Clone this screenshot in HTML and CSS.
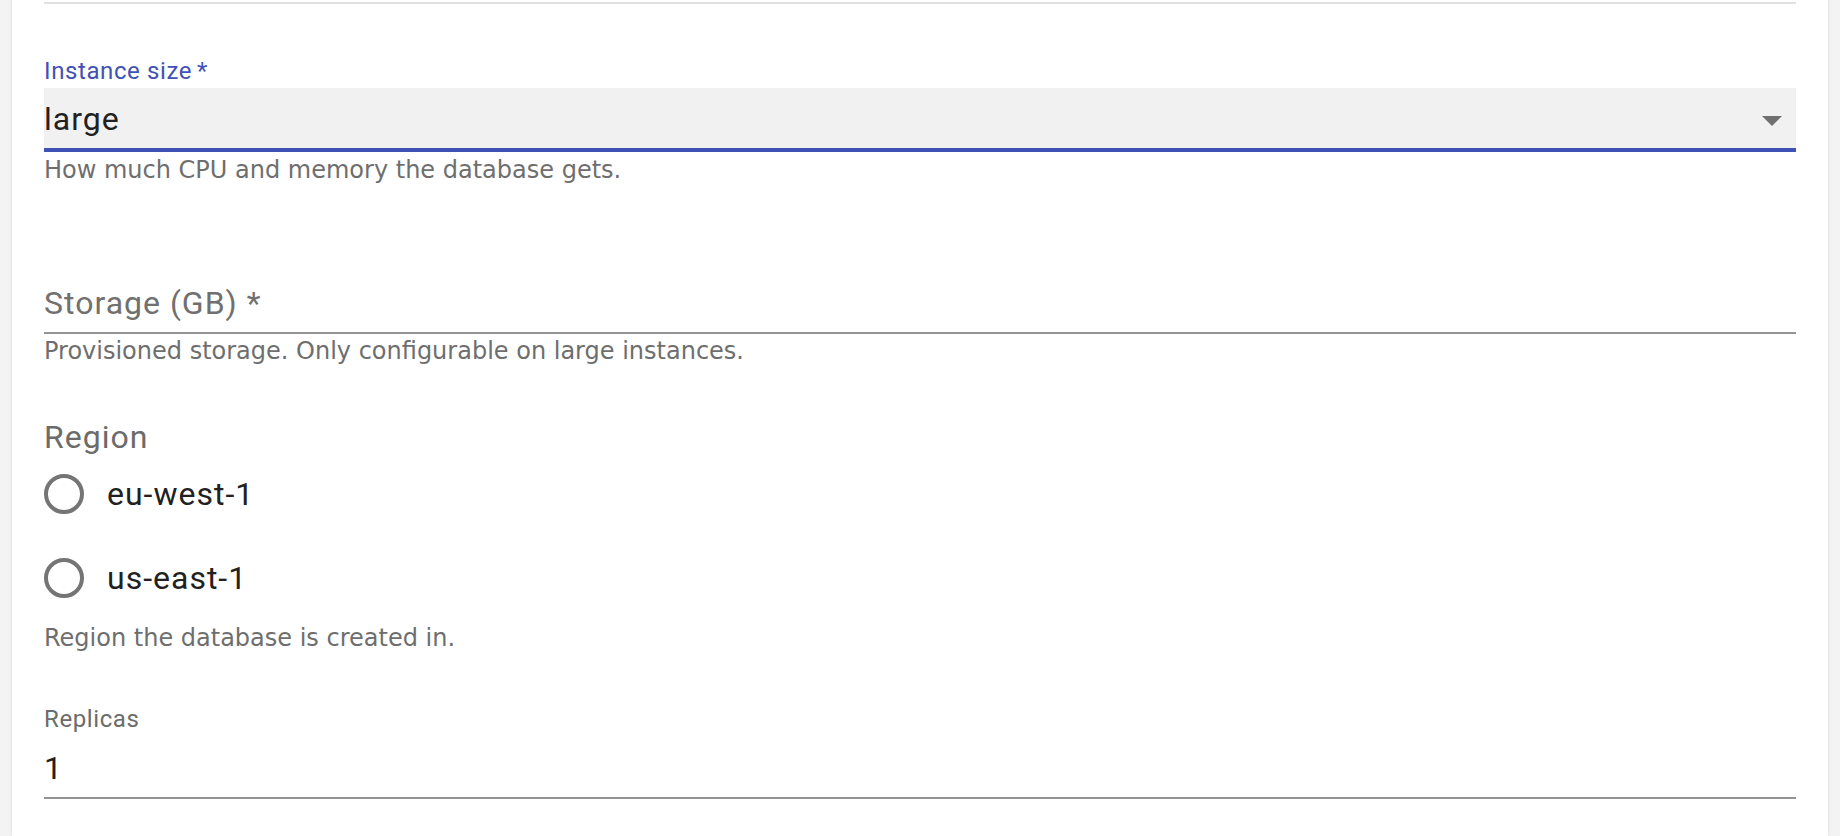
FILE: index.html
```html
<!DOCTYPE html>
<html lang="en">
<head>
<meta charset="utf-8">
<title>Database settings</title>
<link rel="stylesheet" href="styles.css">
</head>
<body>
<main class="card">
  <div class="divider"></div>

  <section class="field field-instance">
    <label class="float-label focused">Instance size<span class="req">*</span></label>
    <div class="select">
      <span class="select-value">large</span>
      <svg class="select-arrow" width="20" height="10" viewBox="0 0 20 10" aria-hidden="true"><polygon points="0,0 20,0 10,10" /></svg>
    </div>
    <p class="helper">How much CPU and memory the database gets.</p>
  </section>

  <section class="field field-storage">
    <div class="textfield">
      <span class="placeholder-label">Storage (GB) *</span>
    </div>
    <p class="helper helper-tight">Provisioned storage. Only configurable on large instances.</p>
  </section>

  <section class="field field-region">
    <div class="group-label">Region</div>
    <div class="radio-row">
      <span class="radio"></span>
      <span class="radio-text">eu-west-1</span>
    </div>
    <div class="radio-row">
      <span class="radio"></span>
      <span class="radio-text">us-east-1</span>
    </div>
    <p class="helper">Region the database is created in.</p>
  </section>

  <section class="field field-replicas">
    <label class="float-label">Replicas</label>
    <div class="textfield textfield-filled">
      <span class="input-value">1</span>
    </div>
  </section>
</main>
</body>
</html>
```

FILE: styles.css
```css
html, body {
  margin: 0;
  padding: 0;
}

body {
  background: #f3f3f3;
  height: 836px;
  overflow: hidden;
  font-family: Roboto, "Liberation Sans", sans-serif;
}

.card {
  margin: 0 12px;
  padding: 2px 32px 0;
  background: #ffffff;
  height: 834px;
  box-shadow: 0 0 3px rgba(0, 0, 0, 0.12);
}

.divider {
  height: 2px;
  background: #e0e0e0;
}

.field {
  display: flex;
  flex-direction: column;
}

.field-instance {
  margin-top: 53px;
}

.float-label {
  font-size: 24px;
  line-height: 28px;
  height: 28px;
  color: #6b6b6b;
  letter-spacing: 0.6px;
}

.float-label.focused {
  color: #3f51b5;
}

.req {
  margin-left: 5px;
}

.select {
  margin-top: 3px;
  height: 64px;
  box-sizing: border-box;
  background: #f1f1f1;
  border-bottom: 4px solid #3f51b5;
  display: flex;
  justify-content: space-between;
  align-items: flex-start;
  padding: 15px 14px 0 0;
}

.select-value {
  font-size: 32px;
  line-height: 32px;
  letter-spacing: 1px;
  color: #212121;
}

.select-arrow {
  margin-top: 13px;
  fill: #707070;
}

.helper {
  margin: 4px 0 0;
  font-family: "DejaVu Sans", sans-serif;
  font-size: 24px;
  line-height: 28px;
  color: #6e6e6e;
}

.helper-tight {
  margin-top: 3px;
}

.field-storage {
  margin-top: 103px;
}

.textfield {
  border-bottom: 2px solid #949494;
  height: 47px;
  box-sizing: border-box;
  display: flex;
  align-items: flex-start;
}

.placeholder-label {
  font-size: 32px;
  line-height: 32px;
  letter-spacing: 1px;
  color: #707070;
}

.field-region {
  margin-top: 57px;
}

.group-label {
  font-size: 32px;
  line-height: 30px;
  letter-spacing: 1px;
  color: #6b6b6b;
}

.radio-row {
  height: 84px;
  display: flex;
  align-items: center;
}

.radio {
  width: 40px;
  height: 40px;
  box-sizing: border-box;
  border: 4px solid #757575;
  border-radius: 50%;
  flex: none;
}

.radio-text {
  margin-left: 23px;
  font-size: 32px;
  line-height: 32px;
  letter-spacing: 1px;
  color: #212121;
}

.field-replicas {
  margin-top: 53px;
}

.textfield-filled {
  margin-top: 19px;
}

.input-value {
  font-size: 32px;
  line-height: 32px;
  letter-spacing: 1px;
  color: #212121;
}
```
